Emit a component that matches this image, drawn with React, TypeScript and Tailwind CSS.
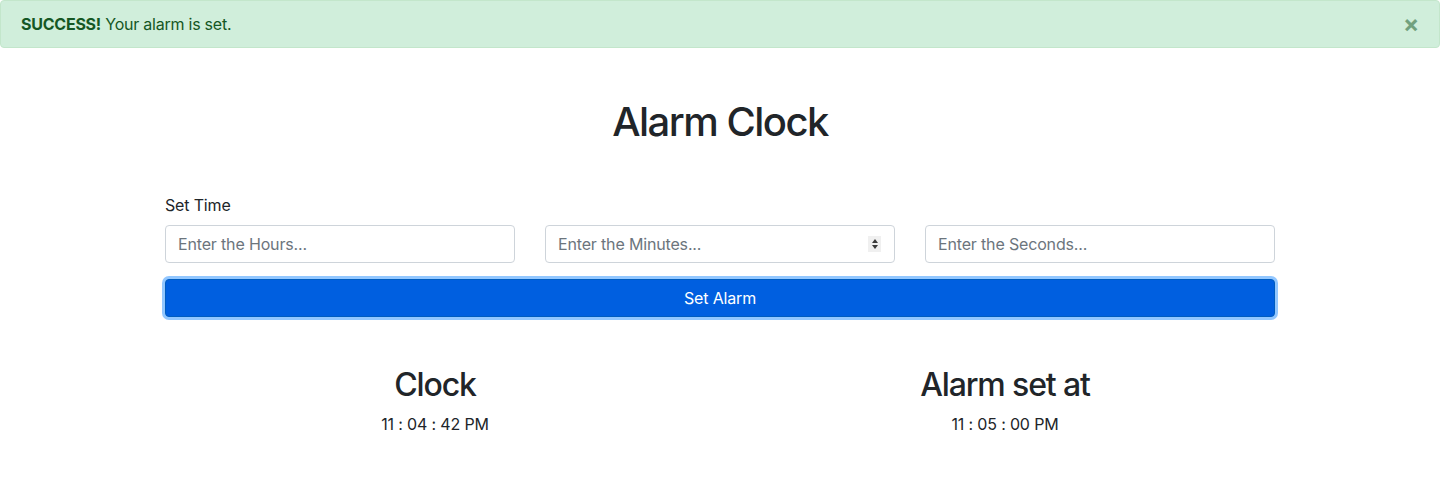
const font = { fontFamily: 'Inter, "Helvetica Neue", Arial, sans-serif' }

function SpinIcon() {
  return (
    <svg viewBox="0 0 8 14" className="h-[14px] w-[8px]">
      <path d="M4 2 7 6H1Z" fill="#3a3a3a" />
      <path d="M4 12 7 8H1Z" fill="#3a3a3a" />
    </svg>
  )
}

function TimeInput({ placeholder, spinner }: { placeholder: string; spinner?: boolean }) {
  return (
    <div className="relative">
      <input
        type="text"
        placeholder={placeholder}
        className="h-[38px] w-full rounded-[4px] border border-[#ced4da] bg-white px-3 text-base tracking-[-0.01em] text-[#495057] placeholder:text-[#6c757d] outline-none"
      />
      {spinner && (
        <span className="absolute right-[14px] top-[11px] flex h-[16px] w-[13px] items-center justify-center bg-[#f0f0f0]">
          <SpinIcon />
        </span>
      )}
    </div>
  )
}

export default function App() {
  return (
    <div className="min-h-[500px] bg-white text-[#212529]" style={font}>
      <div className="flex h-[48px] items-center justify-between rounded-[4px] border border-[#c3e6cb] bg-[#d0eedb] pl-5 pr-5 text-base tracking-[-0.015em] text-[#155724]">
        <p>
          <strong className="font-bold">SUCCESS!</strong> Your alarm is set.
        </p>
        <button className="text-2xl leading-none font-bold text-[#155724] opacity-50">×</button>
      </div>

      <div className="mx-auto w-[1110px] pt-[50px]">
        <h1 className="text-center text-[40px] leading-[48px] font-medium tracking-[-0.038em]">Alarm Clock</h1>

        <div className="mt-[47px]">
          <label className="block text-base leading-6 tracking-[-0.01em]">Set Time</label>
          <div className="mt-2 grid grid-cols-3 gap-[30px]">
            <TimeInput placeholder="Enter the Hours..." />
            <TimeInput placeholder="Enter the Minutes..." spinner />
            <TimeInput placeholder="Enter the Seconds..." />
          </div>
          <button className="mt-4 h-[38px] w-full rounded-[4px] border border-[#005cbf] bg-[#005fe0] text-base tracking-[-0.01em] text-white shadow-[0_0_0_3px_rgba(38,143,255,0.5)]">
            Set Alarm
          </button>
        </div>

        <div className="mt-[49px] grid grid-cols-2 gap-[30px] text-center">
          <div>
            <h2 className="text-[32px] leading-[38px] font-medium tracking-[-0.035em]">Clock</h2>
            <p className="mt-2 text-base leading-6 tracking-[-0.01em]">11 : 04 : 42 PM</p>
          </div>
          <div>
            <h2 className="text-[32px] leading-[38px] font-medium tracking-[-0.035em]">Alarm set at</h2>
            <p className="mt-2 text-base leading-6 tracking-[-0.01em]">11 : 05 : 00 PM</p>
          </div>
        </div>
      </div>
    </div>
  )
}
